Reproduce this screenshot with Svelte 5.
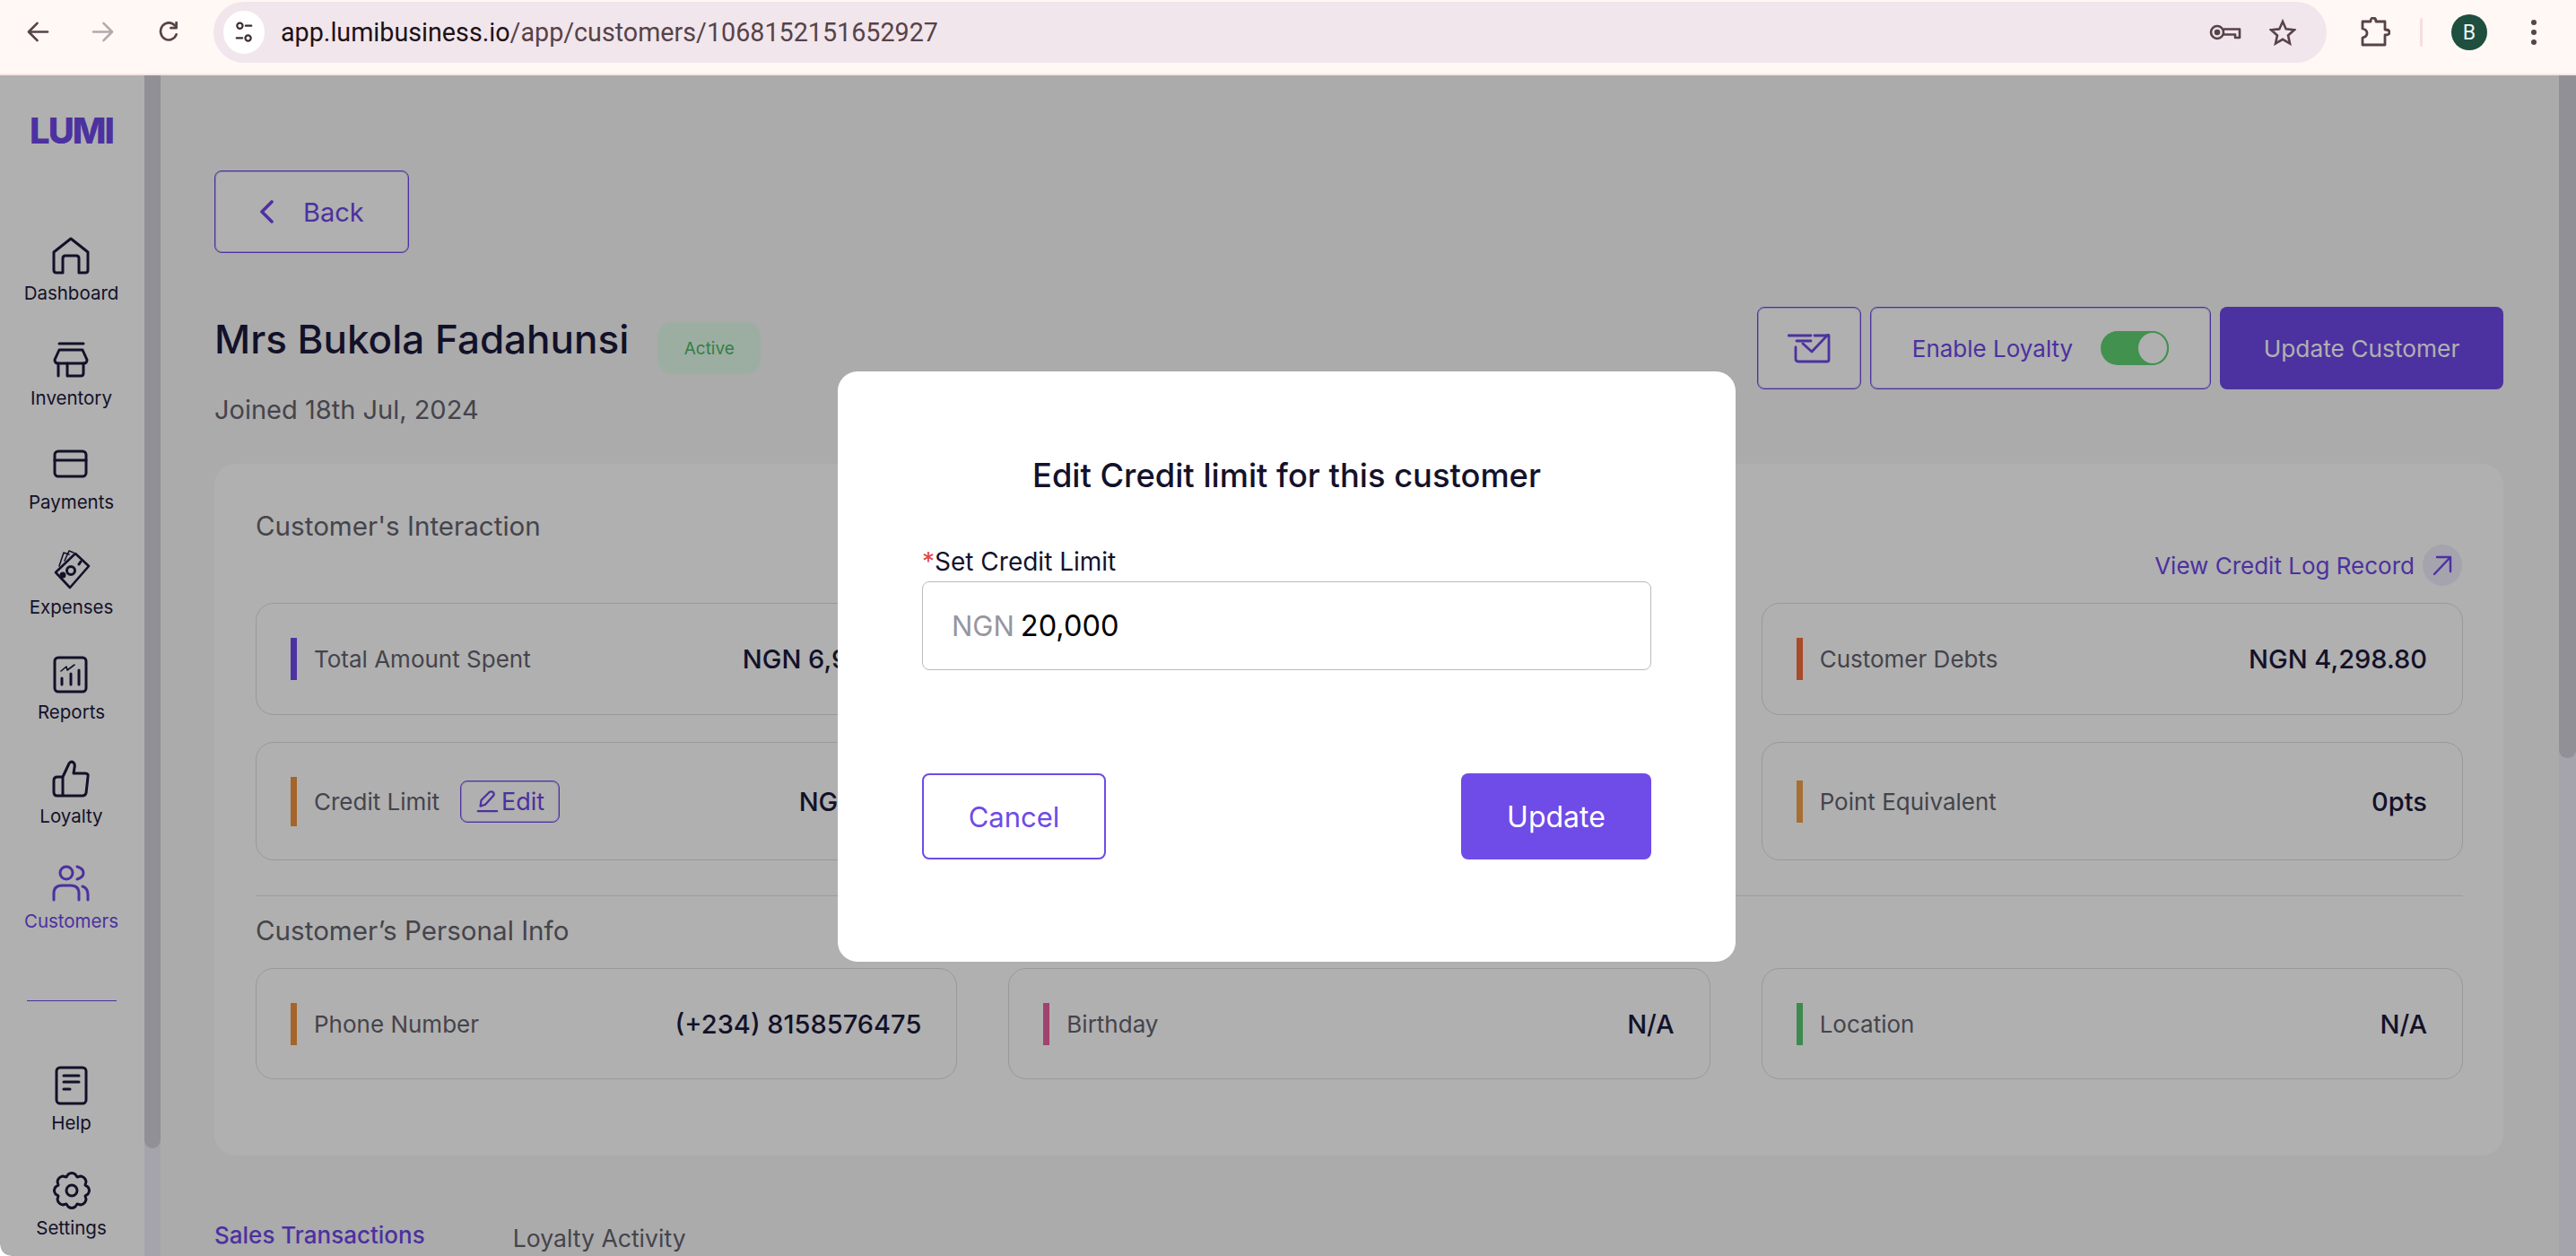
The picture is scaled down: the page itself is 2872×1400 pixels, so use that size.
<script>
let navItems = [
  { label: "Dashboard", icon: "home" },
  { label: "Inventory", icon: "store" },
  { label: "Payments", icon: "card" },
  { label: "Expenses", icon: "cash" },
  { label: "Reports", icon: "report" },
  { label: "Loyalty", icon: "thumb" },
  { label: "Customers", icon: "people", active: true },
];
let bottomItems = [
  { label: "Help", icon: "doc" },
  { label: "Settings", icon: "gear" },
];
let interaction = [
  { label: "Total Amount Spent", value: "NGN 6,900.00", bar: "#6f47e8" },
  { label: "Total Orders", value: "24", bar: "#5bc872" },
  { label: "Customer Debts", value: "NGN 4,298.80", bar: "#f56c3a" },
  { label: "Credit Limit", value: "NGN 0.00", bar: "#ef923e", edit: true },
  { label: "Loyalty Points", value: "0", bar: "#6f47e8" },
  { label: "Point Equivalent", value: "0pts", bar: "#f2a04a" },
];
let personal = [
  { label: "Phone Number", value: "(+234) 8158576475", bar: "#ef923e" },
  { label: "Birthday", value: "N/A", bar: "#eb5fa1" },
  { label: "Location", value: "N/A", bar: "#5bc872" },
];
</script>

{#snippet navIcon(name)}
  <svg class="nav-icon" viewBox="0 0 48 48" fill="none" stroke="currentColor" stroke-width="3" stroke-linecap="round" stroke-linejoin="round">
    {#if name == "home"}
      <path d="M5 20 L24 5 L43 20 V40 Q43 43 40 43 H33 V27 Q33 24 30 24 H18 Q15 24 15 27 V43 H8 Q5 43 5 40 Z" />
    {:else if name == "store"}
      <path d="M11 5 H38" />
      <path d="M11 12 H37 L42 23 Q42 27 38 27 H10 Q6 27 6 23 Z" />
      <path d="M10 27 V41 M38 27 V38 Q38 41 35 41 H20 V27" />
    {:else if name == "card"}
      <rect x="6" y="9" width="35" height="28" rx="4" />
      <path d="M6 19 H41" />
    {:else if name == "cash"}
      <path d="M7 27 L29 6 L44 20 L23 44 Z" stroke-width="2.6" />
      <circle cx="24" cy="25" r="4.5" />
      <circle cx="15" cy="30" r="2" fill="currentColor" />
      <path d="M33 18 L35 15" />
      <path d="M11 20 L16 5 L22 7 M17 14 L22 3 L27 5" stroke-width="1.6" />
    {:else if name == "report"}
      <rect x="6" y="5" width="35" height="38" rx="4" />
      <path d="M14 35 V28 M24 35 V23 M33 35 V19" />
      <path d="M13 20 L19 15 L20 19 L28 13" stroke-width="1.6" />
    {:else if name == "thumb"}
      <path d="M15 22 L22 7 Q24 4 27 6 Q29 8 28 12 L27 18 H40 Q44 18 43 22 L41 40 Q40 43 37 43 H9 Q5 43 5 39 V26 Q5 22 9 22 H15 V43" />
    {:else if name == "people"}
      <circle cx="19" cy="12" r="7" />
      <path d="M31 5 Q38 7 38 12 Q38 17 31 19" />
      <path d="M5 42 V35 Q5 26 14 26 H24 Q33 26 33 35 V42" />
      <path d="M37 27 Q43 29 43 36 V42" />
    {:else if name == "doc"}
      <rect x="7" y="4" width="33" height="40" rx="4" />
      <path d="M15 13 H32 M15 20 H32 M15 28 H22" />
    {:else if name == "gear"}
      <circle cx="24" cy="24" r="6" />
      <path d="M20 6 Q24 3 28 6 L30 9 L34 8 Q39 9 40 14 L39 18 L42 20 Q45 24 42 28 L39 30 L40 34 Q39 39 34 40 L30 39 L28 42 Q24 45 20 42 L18 39 L14 40 Q9 39 8 34 L9 30 L6 28 Q3 24 6 20 L9 18 L8 14 Q9 9 14 8 L18 9 Z" />
    {/if}
  </svg>
{/snippet}

{#snippet infoCard(item)}
  <div class="info-card">
    <span class="bar" class:tall={item.edit} style="background: {item.bar}"></span>
    <span class="info-label">{item.label}</span>
    {#if item.edit}
      <button class="edit-btn">
        <svg viewBox="0 0 28 28" fill="none" stroke="currentColor" stroke-width="2.4" stroke-linecap="round" stroke-linejoin="round">
          <path d="M6 20 L7 13 L17 3 Q19 2 21 3 Q23 5 22 7 L12 18 Z" />
          <path d="M3 26 H26" />
        </svg>
        Edit
      </button>
    {/if}
    <span class="info-value">{item.value}</span>
  </div>
{/snippet}

<div class="browser-bar">
  <svg class="tb-icon back" viewBox="0 0 26 24" fill="none" stroke="currentColor" stroke-width="2.8" stroke-linecap="round" stroke-linejoin="round">
    <path d="M24 12 H3 M12 2 L2 12 L12 22" />
  </svg>
  <svg class="tb-icon forward" viewBox="0 0 26 24" fill="none" stroke="currentColor" stroke-width="2.6" stroke-linecap="round" stroke-linejoin="round">
    <path d="M2 12 H23 M14 2 L24 12 L14 22" />
  </svg>
  <svg class="tb-icon reload" viewBox="0 0 24 24" fill="none" stroke="currentColor" stroke-width="2.8" stroke-linecap="round" stroke-linejoin="round">
    <path d="M21 15 A9.5 10 0 1 1 19.5 5" />
    <path d="M21 1 V7.5 H14.5" />
  </svg>
  <div class="omnibox">
    <span class="tune">
      <svg viewBox="0 0 24 28" fill="none" stroke="#3d2f33" stroke-width="2.4" stroke-linecap="round">
        <circle cx="7" cy="6" r="3.4" />
        <path d="M14 6 H21 M3 21 H10" />
        <circle cx="17" cy="21" r="3.4" />
      </svg>
    </span>
    <span class="url"><span class="host">app.lumibusiness.io</span>/app/customers/1068152151652927</span>
    <div class="omni-right">
      <svg class="key" viewBox="0 0 36 20" fill="none" stroke="#574348" stroke-width="2.6" stroke-linejoin="round">
        <circle cx="9" cy="10" r="7" />
        <circle cx="9" cy="10" r="2" fill="#574348" />
        <path d="M16 6.5 H34 V16 H29 V12.5 H16" />
      </svg>
      <svg class="star" viewBox="0 0 30 30" fill="none" stroke="#574348" stroke-width="2.6" stroke-linejoin="miter">
        <path d="M15 3 L18.7 11.4 L28 12.3 L21 18.4 L23 27.5 L15 22.8 L7 27.5 L9 18.4 L2 12.3 L11.3 11.4 Z" />
      </svg>
    </div>
  </div>
  <svg class="puzzle" viewBox="0 0 34 34" fill="none" stroke="#574348" stroke-width="2.8" stroke-linejoin="round">
    <path d="M3 5 H12 Q12 1 15 1 Q18 1 18 5 H28 V14 Q33 14 33 17 Q33 20 28 20 V31 H3 V23 Q8 22 8 18 Q8 14 3 13 Z" />
  </svg>
  <span class="tb-divider"></span>
  <span class="avatar">B</span>
  <span class="dots"><i></i><i></i><i></i></span>
</div>

<div class="viewport">
  <aside class="sidebar">
    <div class="logo">LUMI</div>
    <nav class="nav">
      {#each navItems as item}
        <div class="nav-item" class:active={item.active}>
          {@render navIcon(item.icon)}
          <span class="nav-label">{item.label}</span>
        </div>
      {/each}
    </nav>
    <div class="nav-divider"></div>
    <nav class="nav">
      {#each bottomItems as item}
        <div class="nav-item">
          {@render navIcon(item.icon)}
          <span class="nav-label">{item.label}</span>
        </div>
      {/each}
    </nav>
  </aside>
  <div class="scroll side-scroll"><div class="thumb"></div></div>

  <main class="main">
    <button class="back-btn">
      <svg viewBox="0 0 16 26" fill="none" stroke="currentColor" stroke-width="3.6" stroke-linecap="round" stroke-linejoin="round">
        <path d="M14 2 L3 13 L14 24" />
      </svg>
      Back
    </button>

    <div class="page-head">
      <div>
        <div class="name-row">
          <h1>Mrs Bukola Fadahunsi</h1>
          <span class="badge">Active</span>
        </div>
        <div class="joined">Joined 18th Jul, 2024</div>
      </div>
      <div class="head-actions">
        <button class="outline-btn mail">
          <svg viewBox="0 0 48 33" fill="none" stroke="currentColor" stroke-width="2.8" stroke-linecap="round" stroke-linejoin="round">
            <path d="M1 2 H26 M10 8 H26" />
            <path d="M30 2 H46 V29 Q46 31 44 31 H12 Q9 31 9 28 V15" />
            <path d="M17 11 L27 20 L45 1" />
          </svg>
        </button>
        <button class="outline-btn loyalty">
          Enable Loyalty
          <span class="toggle"><span class="knob"></span></span>
        </button>
        <button class="solid-btn">Update Customer</button>
      </div>
    </div>

    <section class="panel">
      <h2>Customer's Interaction</h2>
      <div class="log-row">
        <span class="log-link">View Credit Log Record</span>
        <span class="log-arrow">
          <svg viewBox="0 0 24 24" fill="none" stroke="currentColor" stroke-width="2.4" stroke-linecap="round" stroke-linejoin="round">
            <path d="M3 22 L21 3 M6 3 H21 V19" />
          </svg>
        </span>
      </div>
      <div class="card-grid">
        {#each interaction as item}
          {@render infoCard(item)}
        {/each}
      </div>
      <div class="panel-divider"></div>
      <h2>Customer’s Personal Info</h2>
      <div class="card-grid personal">
        {#each personal as item}
          {@render infoCard(item)}
        {/each}
      </div>
    </section>

    <div class="tabs">
      <span class="tab current">Sales Transactions</span>
      <span class="tab">Loyalty Activity</span>
    </div>
  </main>
  <div class="scroll page-scroll"><div class="thumb"></div></div>

  <div class="overlay">
    <div class="modal">
      <h3>Edit Credit limit for this customer</h3>
      <label class="field-label" for="limit"><span class="req">*</span>Set Credit Limit</label>
      <div class="field" id="limit">
        <span class="prefix">NGN</span>
        <span class="amount">20,000</span>
      </div>
      <div class="modal-actions">
        <button class="cancel">Cancel</button>
        <button class="update">Update</button>
      </div>
    </div>
  </div>
  <span class="win-corner"></span>
</div>

<style>
  :global(body) {
    margin: 0;
    overflow: hidden;
    background: #fff;
  }

  * {
    box-sizing: border-box;
  }

  button {
    font-family: inherit;
    cursor: pointer;
  }

  .browser-bar {
    height: 84px;
    display: flex;
    align-items: flex-start;
    background: #fff8f5;
    border-bottom: 2px solid #f5e6e4;
    color: #574348;
    font-family: "Roboto", sans-serif;
    position: relative;
  }

  .tb-icon {
    flex: none;
    width: 25px;
    height: 23px;
    margin-top: 24px;
  }

  .back { margin-left: 30px; }
  .forward { margin-left: 47px; color: #b0aaaa; }
  .reload { margin-left: 49px; width: 24px; }

  .omnibox {
    width: 2356px;
    height: 68px;
    margin: 2px 0 0 38px;
    padding: 0 34px 0 11px;
    border-radius: 34px;
    background: #f1e6ec;
    display: flex;
    align-items: center;
    flex: none;
  }

  .tune {
    width: 46px;
    height: 48px;
    border-radius: 50%;
    background: #fff;
    display: flex;
    align-items: center;
    justify-content: center;
    flex: none;
  }

  .tune svg {
    width: 22px;
    height: 26px;
  }

  .url {
    margin-left: 18px;
    font-size: 28.7px;
    color: #574348;
    white-space: nowrap;
  }

  .host {
    color: #1d1216;
  }

  .omni-right {
    margin-left: auto;
    display: flex;
    align-items: center;
    gap: 31px;
  }

  .key { width: 36px; height: 20px; }
  .star { width: 30px; height: 30px; }

  .puzzle {
    width: 34px;
    height: 34px;
    margin: 19px 0 0 37px;
    flex: none;
  }

  .tb-divider {
    width: 3px;
    height: 32px;
    margin: 20px 0 0 33px;
    border-radius: 2px;
    background: #f6dde1;
    flex: none;
  }

  .avatar {
    width: 40px;
    height: 40px;
    margin: 16px 0 0 32px;
    border-radius: 50%;
    background: #1e4f3f;
    color: #eef5f2;
    font-size: 23px;
    display: flex;
    align-items: center;
    justify-content: center;
    flex: none;
  }

  .dots {
    margin: 22px 0 0 49px;
    display: flex;
    flex-direction: column;
    gap: 5px;
  }

  .dots i {
    width: 6px;
    height: 6px;
    border-radius: 50%;
    background: #574348;
  }

  .viewport {
    height: 1316px;
    display: flex;
    position: relative;
    overflow: hidden;
    font-family: "Inter", sans-serif;
    color: #1c1a3c;
  }

  .sidebar {
    width: 161px;
    flex: none;
    background: #fff;
    display: flex;
    flex-direction: column;
    align-items: center;
    padding: 38px 2px 0 0;
  }

  .logo {
    height: 48px;
    line-height: 48px;
    font-size: 40px;
    font-weight: 800;
    letter-spacing: -2px;
    color: #6f47e8;
    margin-bottom: 91px;
  }

  .nav {
    display: flex;
    flex-direction: column;
    gap: 32.7px;
    align-items: center;
  }

  .nav-item {
    display: flex;
    flex-direction: column;
    align-items: center;
    color: #1c1a3c;
  }

  .nav-item.active {
    color: #6f47e8;
  }

  .nav-icon {
    width: 48px;
    height: 48px;
  }

  .nav-label {
    height: 36px;
    line-height: 36px;
    font-size: 20.5px;
    white-space: nowrap;
  }

  .nav-divider {
    width: 100px;
    height: 1px;
    background: #6f47e8;
    margin: 70px 0;
  }

  .scroll {
    width: 18px;
    flex: none;
    background: #efeefb;
  }

  .thumb {
    background: #d2d1d9;
    border-radius: 0 0 9px 9px;
  }

  .side-scroll .thumb { height: 1196px; }
  .page-scroll { width: 19px; }
  .page-scroll .thumb { height: 761px; }

  .main {
    flex: 1;
    min-width: 0;
    background: #f8f8f8;
    padding: 106px 62px 0 60px;
  }

  .back-btn {
    width: 217px;
    height: 92px;
    display: flex;
    align-items: center;
    gap: 33px;
    padding: 0 0 0 49px;
    background: #fff;
    border: 1px solid #6f47e8;
    box-shadow: inset 0 0 0 1px rgba(111, 71, 232, 0.35);
    border-radius: 8px;
    color: #6f47e8;
    font-size: 29px;
  }

  .back-btn svg {
    width: 16px;
    height: 26px;
  }

  .page-head {
    display: flex;
    justify-content: space-between;
    margin-top: 60px;
  }

  .name-row {
    display: flex;
    align-items: flex-start;
    height: 72px;
  }

  h1 {
    margin: 0;
    font-size: 44px;
    line-height: 72px;
    font-weight: 500;
  }

  .badge {
    width: 115px;
    height: 58px;
    margin: 17px 0 0 32px;
    border-radius: 16px;
    background: #e2fceb;
    color: #4fb865;
    font-size: 19px;
    display: flex;
    align-items: center;
    justify-content: center;
  }

  .joined {
    margin-top: 23px;
    line-height: 40px;
    font-size: 29px;
    color: #64636f;
  }

  .head-actions {
    display: flex;
    gap: 10px;
    height: 92px;
  }

  .outline-btn {
    height: 92px;
    background: #fff;
    border: 1px solid #6f47e8;
    box-shadow: inset 0 0 0 1px rgba(111, 71, 232, 0.35);
    border-radius: 8px;
    color: #6f47e8;
    font-size: 26px;
    display: flex;
    align-items: center;
    justify-content: center;
  }

  .mail {
    width: 116px;
  }

  .mail svg {
    width: 48px;
    height: 33px;
  }

  .loyalty {
    width: 380px;
    gap: 31px;
  }

  .toggle {
    width: 76px;
    height: 38px;
    border-radius: 19px;
    background: #62d273;
    display: flex;
    justify-content: flex-end;
  }

  .knob {
    width: 36px;
    height: 38px;
    border-radius: 50%;
    background: #fff;
    border: 2px solid #62d273;
  }

  .solid-btn {
    width: 316px;
    height: 92px;
    background: #6f47e8;
    border: none;
    border-radius: 8px;
    color: #fff;
    font-size: 26.3px;
  }

  .panel {
    margin-top: 40px;
    padding: 49px 45px 85px 46px;
    background: #fff;
    border-radius: 24px;
  }

  h2 {
    margin: 0;
    line-height: 40px;
    font-size: 29.6px;
    font-weight: 400;
    color: #64636f;
  }

  .log-row {
    display: flex;
    align-items: center;
    justify-content: flex-end;
    gap: 9px;
    height: 46px;
    margin: 1px 1px 19px 0;
    color: #6f47e8;
    font-size: 26px;
  }

  .log-arrow {
    width: 44px;
    height: 46px;
    border-radius: 50%;
    background: #f0ecfc;
    display: flex;
    align-items: center;
    justify-content: center;
  }

  .log-arrow svg {
    width: 24px;
    height: 24px;
  }

  .card-grid {
    display: grid;
    grid-template-columns: repeat(3, 1fr);
    grid-template-rows: 125px 132px;
    gap: 30px 57px;
  }

  .card-grid.personal {
    grid-template-rows: 124px;
    margin-top: 22px;
  }

  .info-card {
    display: flex;
    align-items: center;
    padding: 0 39px 0 38px;
    border: 1px solid #dedede;
    border-radius: 20px;
    background: #fff;
  }

  .bar {
    width: 7px;
    height: 47px;
    flex: none;
    margin-right: 19px;
  }

  .bar.tall {
    height: 55px;
  }

  .info-label {
    font-size: 26px;
    color: #64636f;
    white-space: nowrap;
  }

  .info-value {
    margin-left: auto;
    font-size: 29px;
    font-weight: 500;
    white-space: nowrap;
  }

  .edit-btn {
    width: 111px;
    height: 47px;
    margin-left: 23px;
    padding: 0;
    border: 1px solid #6f47e8;
    box-shadow: inset 0 0 0 1px rgba(111, 71, 232, 0.35);
    border-radius: 8px;
    background: #fff;
    color: #6f47e8;
    font-size: 27px;
    display: flex;
    align-items: center;
    justify-content: center;
    gap: 3px;
  }

  .edit-btn svg {
    width: 26px;
    height: 28px;
  }

  .panel-divider {
    height: 1px;
    margin: 39px 0 18px;
    background: #e4e4e4;
  }

  .tabs {
    display: flex;
    gap: 98px;
    margin-top: 69px;
    line-height: 40px;
    font-size: 26.6px;
    white-space: nowrap;
  }

  .tab {
    padding-top: 3px;
    color: #64636f;
  }

  .tab.current {
    padding-top: 0;
    color: #6f47e8;
    font-size: 26px;
    font-weight: 500;
  }

  .overlay {
    position: absolute;
    inset: 0;
    background: rgba(0, 0, 0, 0.31);
  }

  .modal {
    position: absolute;
    left: 934px;
    top: 330px;
    width: 1001px;
    height: 658px;
    padding: 93px 94px 0;
    border-radius: 22px;
    background: #fff;
  }

  h3 {
    margin: 0;
    text-align: center;
    font-size: 36.3px;
    line-height: 46px;
    font-weight: 500;
    color: #14122b;
  }

  .field-label {
    display: block;
    margin-top: 54px;
    line-height: 38px;
    font-size: 28px;
    color: #14122b;
  }

  .req {
    color: #e04848;
  }

  .field {
    height: 99px;
    margin-top: 3px;
    padding: 0 32px;
    border: 1px solid #bbb;
    border-radius: 8px;
    display: flex;
    align-items: center;
    gap: 7px;
    font-size: 31px;
  }

  .prefix {
    color: #9696a0;
  }

  .amount {
    color: #000;
    font-size: 32.5px;
  }

  .modal-actions {
    display: flex;
    justify-content: space-between;
    margin-top: 115px;
  }

  .cancel, .update {
    height: 96px;
    border-radius: 8px;
    font-size: 31px;
  }

  .cancel {
    width: 205px;
    background: #fff;
    border: 2px solid #6f4be7;
    color: #6f4be7;
  }

  .update {
    width: 212px;
    background: #6f4be7;
    border: none;
    color: #fff;
    font-size: 32px;
  }

  .win-corner {
    position: absolute;
    left: 0;
    bottom: 0;
    width: 12px;
    height: 12px;
    background: radial-gradient(circle at 100% 0, transparent 11px, #fff 12px);
  }
</style>
